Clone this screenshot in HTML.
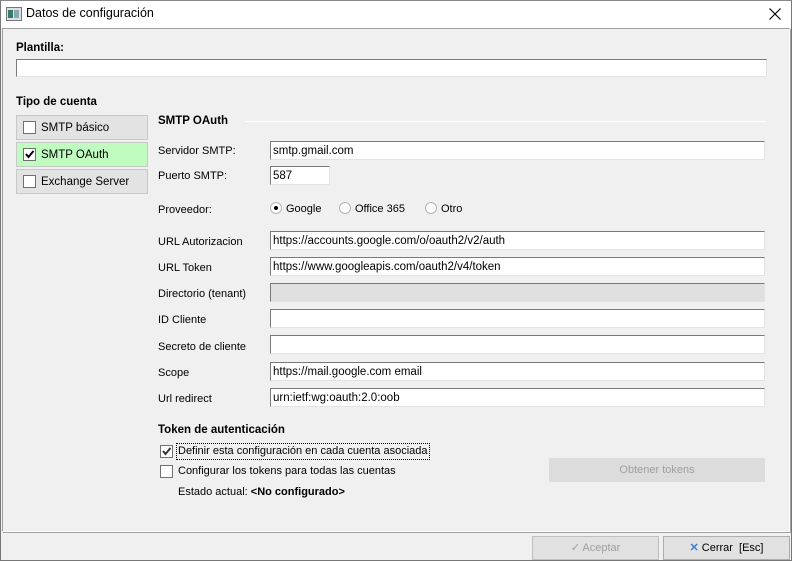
<!DOCTYPE html>
<html><head><meta charset="utf-8"><style>
*{box-sizing:border-box;margin:0;padding:0}
body{width:792px;height:561px;background:#f0f0f0;font-family:"Liberation Sans",sans-serif;font-size:11px;color:#000;position:relative;overflow:hidden}
.a{position:absolute;white-space:nowrap;line-height:15px}
.win{position:absolute;left:0;top:0;width:792px;height:561px;border:1px solid #777;border-top-color:#888}
.title{position:absolute;left:1px;top:1px;width:790px;height:27px;background:#fff}
.panel{position:absolute;left:2px;top:28px;width:788px;height:504px;border:1px solid #a0a0a0;border-right-color:#fff;border-bottom-color:#fff;box-shadow:1px 1px 0 #a0a0a0}
.in{position:absolute;height:19px;background:#fff;border:1px solid #7a7a7a;border-right-color:#e3e3e3;border-bottom-color:#e3e3e3;padding:3px 2px;font-size:11.5px;line-height:13px;white-space:nowrap;overflow:hidden}
.b{font-weight:bold;font-size:11.5px}
.cb{position:absolute;width:13px;height:13px;background:#fff;border:1px solid #707070}
.tab{position:absolute;left:16px;width:132px;height:25px;border:1px solid #c8c8c8;background:#e3e3e3}
.rad{position:absolute;width:12px;height:12px;border-radius:50%;background:#fff;border:1px solid #b5b5b5}
.btn{position:absolute;background:#e1e1e1;border:1px solid #adadad;text-align:center;line-height:22px}
.l{font-size:11.5px}
</style></head><body>
<div class="win"></div>
<div class="title"></div>
<svg class="a" style="left:6px;top:7px" width="16" height="14"><rect x="0.5" y="0.5" width="15" height="13" fill="#dde" stroke="#777"/><rect x="2" y="3" width="5" height="8" fill="#3a7a6a"/><rect x="8" y="3" width="5" height="8" fill="#8aa"/></svg>
<div class="a" style="left:26px;top:6px;font-size:12.5px">Datos de configuración</div>
<svg class="a" style="left:769px;top:8px" width="12" height="12"><path d="M0.5 0.5L11.5 11.5M11.5 0.5L0.5 11.5" stroke="#000" stroke-width="1.2"/></svg>
<div class="panel"></div>
<div class="a b" style="left:16px;top:41px">Plantilla:</div>
<div class="in" style="left:16px;top:59px;width:751px;height:18px"></div>
<div class="a b" style="left:16px;top:95px">Tipo de cuenta</div>
<div class="tab" style="top:115px"></div><div class="cb" style="left:23px;top:121px"></div><div class="a l" style="left:41px;top:121px">SMTP básico</div>
<div class="tab" style="top:142px;background:#c0fcc0;border-color:#c8c8c8"></div><div class="cb" style="left:23px;top:148px"></div>
<svg class="a" style="left:25px;top:150px" width="10" height="9"><path d="M1 4L3.5 7L8.5 1" stroke="#000" stroke-width="2" fill="none"/></svg><div class="a l" style="left:41px;top:148px">SMTP OAuth</div>
<div class="tab" style="top:169px"></div><div class="cb" style="left:23px;top:175px"></div><div class="a l" style="left:41px;top:175px">Exchange Server</div>
<div class="a b" style="left:158px;top:114px">SMTP OAuth</div>
<div class="a" style="left:245px;top:121px;width:521px;height:1px;background:#a0a0a0;border-bottom:1px solid #fff"></div>
<div class="a" style="left:158px;top:144px">Servidor SMTP:</div><div class="in" style="left:270px;top:141px;width:495px">smtp.gmail.com</div>
<div class="a" style="left:158px;top:169px">Puerto SMTP:</div><div class="in" style="left:270px;top:166px;width:60px">587</div>
<div class="a" style="left:158px;top:203px">Proveedor:</div>
<div class="rad" style="left:270px;top:202px"></div><div class="a" style="left:274px;top:206px;width:4px;height:4px;border-radius:50%;background:#000"></div><div class="a" style="left:286px;top:202px">Google</div>
<div class="rad" style="left:339px;top:202px"></div><div class="a" style="left:355px;top:202px">Office 365</div>
<div class="rad" style="left:425px;top:202px"></div><div class="a" style="left:441px;top:202px">Otro</div>
<div class="a" style="left:158px;top:235px">URL Autorizacion</div><div class="in" style="left:270px;top:231px;width:495px">https://accounts.google.com/o/oauth2/v2/auth</div>
<div class="a" style="left:158px;top:261px">URL Token</div><div class="in" style="left:270px;top:257px;width:495px">https://www.googleapis.com/oauth2/v4/token</div>
<div class="a" style="left:158px;top:287px">Directorio (tenant)</div><div class="in" style="left:270px;top:283px;width:495px;background:#e0e0e0"></div>
<div class="a" style="left:158px;top:313px">ID Cliente</div><div class="in" style="left:270px;top:309px;width:495px"></div>
<div class="a" style="left:158px;top:340px">Secreto de cliente</div><div class="in" style="left:270px;top:335px;width:495px"></div>
<div class="a" style="left:158px;top:366px">Scope</div><div class="in" style="left:270px;top:362px;width:495px">https://mail.google.com email</div>
<div class="a" style="left:158px;top:392px">Url redirect</div><div class="in" style="left:270px;top:388px;width:495px">urn:ietf:wg:oauth:2.0:oob</div>
<div class="a b" style="left:158px;top:423px">Token de autenticación</div>
<div class="cb" style="left:160px;top:445px"></div><svg class="a" style="left:162px;top:447px" width="10" height="9"><path d="M1 4L3.5 7L8.5 1" stroke="#333" stroke-width="2" fill="none"/></svg>
<div class="a" style="left:177px;top:444px;outline:1px dotted #000;padding:0 1px">Definir esta configuración en cada cuenta asociada</div>
<div class="cb" style="left:160px;top:465px"></div><div class="a" style="left:178px;top:464px">Configurar los tokens para todas las cuentas</div>
<div class="a" style="left:178px;top:485px">Estado actual: <b>&lt;No configurado&gt;</b></div>
<div class="btn" style="left:549px;top:458px;width:216px;height:24px;border-color:#dcdcdc;background:#dcdcdc;color:#a0a0a0">Obtener tokens</div>
<div class="btn" style="left:532px;top:536px;width:127px;height:24px;border-color:#bfbfbf;color:#a0a0a0">✓ Aceptar</div>
<div class="btn" style="left:663px;top:536px;width:127px;height:24px"><span style="color:#3a7fd0;font-weight:bold">✕</span> Cerrar&nbsp;&nbsp;[Esc]</div>
</body></html>
